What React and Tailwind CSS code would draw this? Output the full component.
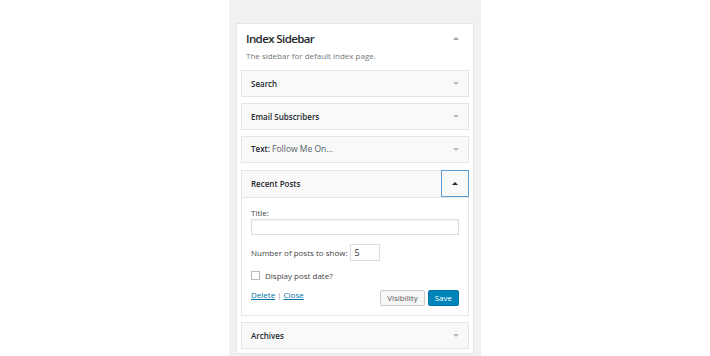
const widgets = [
  { title: 'Search' },
  { title: 'Email Subscribers' },
  { title: 'Text:', sub: 'Follow Me On...' },
];

function Arrow({ up, className = '' }) {
  return (
    <svg width="6" height="3" viewBox="0 0 6 3" className={className}>
      {up ? <path d="M0 3 L3 0 L6 3 Z" fill="currentColor" /> : <path d="M0 0 L3 3 L6 0 Z" fill="currentColor" />}
    </svg>
  );
}

function WidgetHead({ title, sub }) {
  return (
    <div className="h-[27px] border border-[#e5e5e5] bg-[#f9f9f9] flex items-center justify-between pl-[9px] pr-[9px]">
      <span className="text-[8px] font-semibold text-[#23282d]">
        {title}
        {sub && <span className="font-normal text-[8.5px] text-[#555d66]"> {sub}</span>}
      </span>
      <Arrow className="text-[#b4b9be]" />
    </div>
  );
}

export default function App() {
  return (
    <div className="w-[710px] h-[356px] bg-white flex justify-center overflow-hidden" style={{ fontFamily: '"Open Sans", sans-serif' }}>
      <div className="w-[252px] h-full bg-[#f1f1f1] px-[7px] pt-[23px]">
        <div className="bg-white border border-[#e5e5e5] h-[331px] px-[4px]">
          {/* sidebar header */}
          <div className="flex items-start justify-between pl-[5px] pr-[10px] pt-[7px]">
            <h2 className="text-[11.5px] leading-[16px] tracking-[-0.6px] font-semibold text-[#23282d]">Index Sidebar</h2>
            <Arrow up className="text-[#a0a5aa] mt-[6px]" />
          </div>
          <p className="pl-[5px] mt-[3px] text-[8px] leading-[12px] text-[#72777c]">The sidebar for default index page.</p>

          <div className="mt-[8px] flex flex-col gap-[6px]">
            {widgets.map((w) => (
              <WidgetHead key={w.title} {...w} />
            ))}
          </div>

          {/* expanded widget */}
          <div className="mt-[7px] border border-[#e5e5e5]">
            <div className="h-[26px] bg-[#f9f9f9] flex items-center justify-between pl-[9px]">
              <span className="text-[8px] font-semibold text-[#23282d]">Recent Posts</span>
              <div className="w-[28px] h-[27px] -mt-[1px] -mr-[1px] border border-[#5b9dd9] flex items-center justify-center text-[#23282d]">
                <Arrow up />
              </div>
            </div>
            <div className="bg-white border-t border-[#e5e5e5] px-[9px] pt-[9px] pb-[9px] text-[8px] text-[#444]">
              <div className="leading-[12px]">Title:</div>
              <div className="h-[16px] border border-[#ddd] shadow-[inset_0_1px_1px_rgba(0,0,0,0.05)]" />
              <div className="mt-[9px] flex items-center gap-[2px]">
                <span>Number of posts to show:</span>
                <div className="w-[30px] h-[17px] border border-[#ddd] flex items-center pl-[4px] text-[9px] text-[#32373c]">5</div>
              </div>
              <div className="mt-[9px] h-[11px] flex items-center gap-[5px]">
                <div className="w-[9px] h-[9px] border border-[#b4b9be] bg-white" />
                <span>Display post date?</span>
              </div>
              <div className="mt-[9px] flex items-start justify-between">
                <div className="text-[#0073aa] leading-[12px] -mt-[1px]">
                  <span className="underline">Delete</span>
                  <span className="text-[#999] mx-[2px]">|</span>
                  <span className="underline">Close</span>
                </div>
                <div className="flex gap-[3px]">
                  <button className="h-[16px] px-[6px] border border-[#ccc] bg-[#f7f7f7] rounded-[2px] text-[8px] text-[#555]">Visibility</button>
                  <button className="h-[16px] px-[6px] border border-[#0073aa] bg-[#0085ba] rounded-[2px] text-[8px] text-white">Save</button>
                </div>
              </div>
            </div>
          </div>

          <div className="mt-[6px]">
            <WidgetHead title="Archives" />
          </div>
        </div>
      </div>
    </div>
  );
}
